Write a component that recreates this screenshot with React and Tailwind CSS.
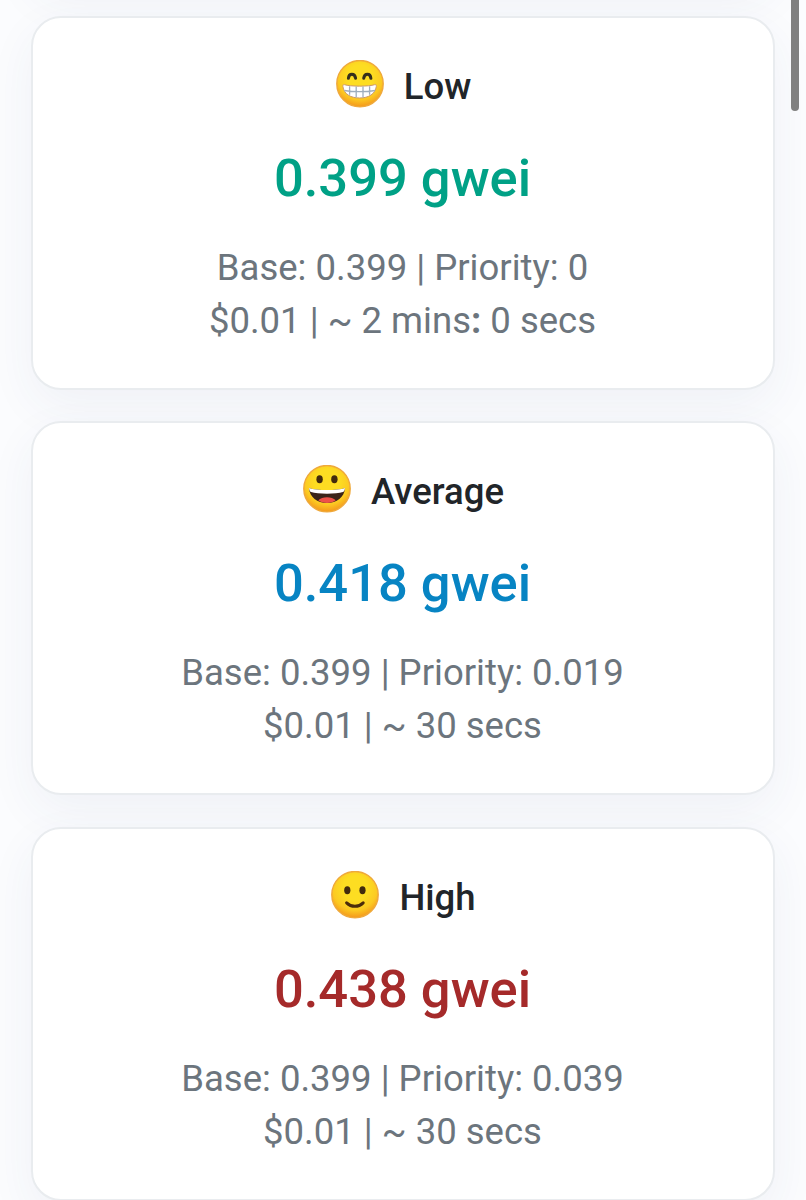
function Face({ kind }) {
  return (
    <svg viewBox="0 0 48 48" className="h-12 w-12 shrink-0" aria-hidden="true">
      <defs>
        <radialGradient id={`skin-${kind}`} cx="50%" cy="36%" r="66%">
          <stop offset="0.4" stopColor="#fddd22" />
          <stop offset="0.72" stopColor="#fcca22" />
          <stop offset="1" stopColor="#f3911b" />
        </radialGradient>
      </defs>
      <circle cx="24" cy="23.7" r="23.2" fill={`url(#skin-${kind})`} stroke="#efa93c" strokeWidth="1.4" />
      {kind === 'grin' && (
        <g>
          <path d="M12.400 18.300c.5-5.400 6.400-5.400 7.200 0M27.700 18.300c.8-5.400 6.700-5.400 7.200 0" fill="none" stroke="#352f1c" strokeWidth="3" strokeLinecap="round" />
          <path d="M8.600 24.700c5 1.900 25 1.900 30 0 1.300-.4 1.900.4 1.700 1.800C39.300 34 32.600 38 23.600 38S7.900 34 6.900 26.500C6.700 25.100 7.300 24.300 8.600 24.700Z" fill="#fff" stroke="#cf9a68" strokeWidth="1" />
          <path d="M8.500 30.500c8 1.600 22 1.600 30.500 0M13.600 26.300v8.500M20.200 26.500v11M27 26.500v11M33.600 26.300v8.500" fill="none" stroke="#9faebd" strokeWidth="1.300" />
        </g>
      )}
      {kind === 'open' && (
        <g>
          <ellipse cx="16.600" cy="14.200" rx="3.200" ry="4" fill="#422b0d" />
          <ellipse cx="31.400" cy="14.200" rx="3.200" ry="4" fill="#422b0d" />
          <path d="M6 23c8 2.700 28 2.700 36 0C41.500 32 33.600 38 24 38S6.500 32 6 23Z" fill="#3b2419" />
          <path d="M15.300 35.300c3.800-4.200 13.600-4.200 17.400 0-4.500 3.700-12.900 3.700-17.400 0Z" fill="#ed5148" />
          <path d="M6 23c8 2.700 28 2.700 36 0-.2 1.800-.8 3.600-2 4.100-7 2.100-25 2.100-32 0-1.200-.5-1.800-2.300-2-4.100Z" fill="#fff" />
        </g>
      )}
      {kind === 'smile' && (
        <g>
          <ellipse cx="16.300" cy="19.300" rx="3.100" ry="4" fill="#422b0d" />
          <ellipse cx="31.500" cy="19.300" rx="3.100" ry="4" fill="#422b0d" />
          <path d="M15.600 31.900c4.700 4.600 11.900 4.600 16.600 0" fill="none" stroke="#4b2c0b" strokeWidth="3" strokeLinecap="round" />
        </g>
      )}
    </svg>
  );
}

const TIERS = [
  { kind: 'grin', label: 'Low', price: '0.399 gwei', color: 'text-[#00a186]', priority: '0', time: <>~ 2 mins<b className="font-bold">:</b> 0 secs</> },
  { kind: 'open', label: 'Average', price: '0.418 gwei', color: 'text-[#0784c3]', priority: '0.019', time: '~ 30 secs' },
  { kind: 'smile', label: 'High', price: '0.438 gwei', color: 'text-[#a52a2a]', priority: '0.039', time: '~ 30 secs' },
];

function GasCard({ kind, label, price, color, priority, time }) {
  return (
    <section className="h-[374px] shrink-0 rounded-[30px] border-2 border-[#e9ecef] bg-white pt-[42px] pr-px text-center whitespace-nowrap shadow-[0_16px_48px_rgba(50,62,120,0.06)]">
      <div className="flex h-12 justify-center gap-[20px] pl-[2px]">
        <Face kind={kind} />
        <span className="pt-[6px] text-[36.500px] leading-[42px] font-medium text-[#212529]">{label}</span>
      </div>
      <div className={`mt-[38px] text-[52.500px] leading-[64px] font-medium ${color}`}>{price}</div>
      <div className="mt-[31px] text-[36.500px] leading-[53px] text-[#6c757d]">
        <div>Base: 0.399 | Priority: {priority}</div>
        <div>$0.01 | {time}</div>
      </div>
    </section>
  );
}

export default function App() {
  return (
    <main className="relative h-[1200px] overflow-hidden bg-[#fbfcfe] font-['Roboto',sans-serif]">
      <div className="-mt-[390px] flex flex-col gap-[31.500px] pr-[31px] pl-[31px]">
        <div className="h-[374px] shrink-0 rounded-[30px] border-2 border-[#e9ecef] bg-white shadow-[0_16px_48px_rgba(50,62,120,0.06)]" />
        {TIERS.map((tier) => (
          <GasCard key={tier.label} {...tier} />
        ))}
      </div>
      <div className="absolute -top-3 right-[7px] h-[123px] w-[8px] rounded-full bg-[#808080]" />
    </main>
  );
}
